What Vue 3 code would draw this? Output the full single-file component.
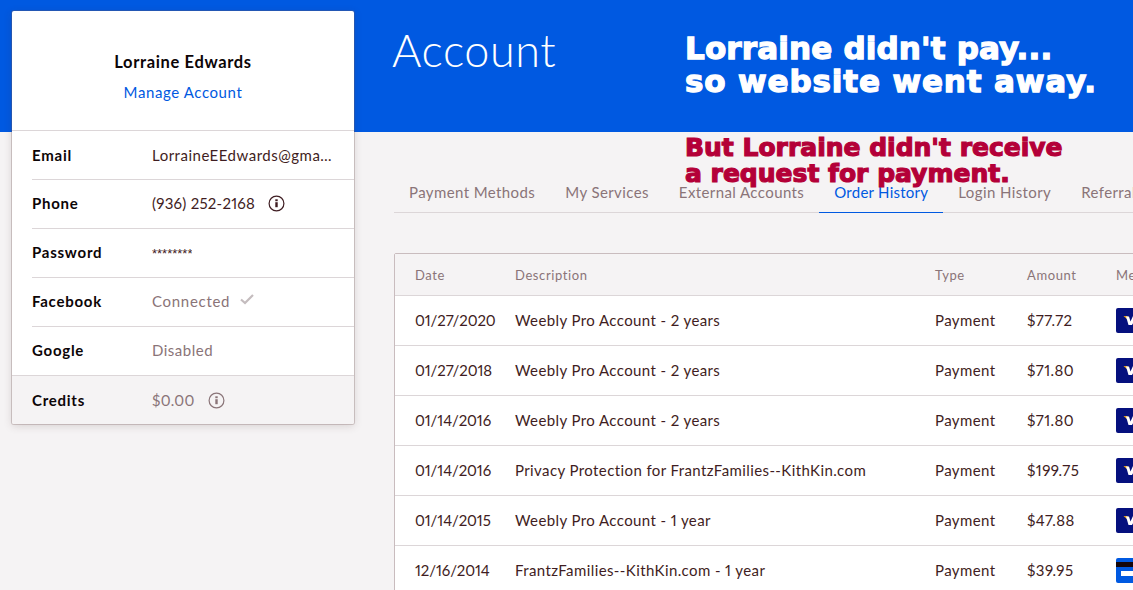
<script setup>
const rows = [
  { label: 'Email', value: 'LorraineEEdwards@gmail.com', kind: 'dark' },
  { label: 'Phone', value: '(936) 252-2168', kind: 'dark num', info: true },
  { label: 'Password', value: '********', kind: 'dark pw' },
  { label: 'Facebook', value: 'Connected', kind: 'muted wide', check: true },
  { label: 'Google', value: 'Disabled', kind: 'muted' },
  { label: 'Credits', value: '$0.00', kind: 'muted num', info: true, shaded: true }
]
const tabs = ['Payment Methods', 'My Services', 'External Accounts', 'Order History', 'Login History', 'Referrals']
const orders = [
  ['01/27/2020', 'Weebly Pro Account - 2 years', '$77.72', 'visa'],
  ['01/27/2018', 'Weebly Pro Account - 2 years', '$71.80', 'visa'],
  ['01/14/2016', 'Weebly Pro Account - 2 years', '$71.80', 'visa'],
  ['01/14/2016', 'Privacy Protection for FrantzFamilies--KithKin.com', '$199.75', 'visa'],
  ['01/14/2015', 'Weebly Pro Account - 1 year', '$47.88', 'visa'],
  ['12/16/2014', 'FrantzFamilies--KithKin.com - 1 year', '$39.95', 'card']
]
</script>

<template>
  <div class="page">
    <div class="band"></div>
    <aside class="card">
      <div class="who">
        <div class="name">Lorraine Edwards</div>
        <a class="manage">Manage Account</a>
      </div>
      <div v-for="r in rows" :key="r.label" class="row" :class="{ shaded: r.shaded }">
        <div class="inner">
          <span class="label">{{ r.label }}</span>
          <span class="value" :class="r.kind">
            <span class="vt">{{ r.value }}</span>
            <svg v-if="r.info" class="ico" width="17" height="17" viewBox="0 0 17 17" fill="none" stroke="currentColor">
              <circle cx="8.5" cy="8.5" r="7.4" stroke-width="1.2" />
              <rect x="7.3" y="7.2" width="2.4" height="5" fill="currentColor" stroke="none" />
              <rect x="7.3" y="4.3" width="2.4" height="1.9" fill="currentColor" stroke="none" />
            </svg>
            <svg v-if="r.check" class="ico chk" width="14" height="11" viewBox="0 0 14 11" fill="none" stroke="#c4bcbe" stroke-width="2.2">
              <path d="M1 5.5 L5 9 L13 1" />
            </svg>
          </span>
        </div>
      </div>
    </aside>
    <h1 class="title">Account</h1>
    <main class="main">
      <nav class="tabs">
        <a v-for="t in tabs" :key="t" class="tab" :class="{ on: t === 'Order History' }">{{ t }}</a>
      </nav>
      <div class="table">
        <div class="tr head">
          <span>Date</span><span>Description</span><span>Type</span><span>Amount</span><span>Method</span>
        </div>
        <div v-for="(o, i) in orders" :key="i" class="tr">
          <span class="date">{{ o[0] }}</span><span>{{ o[1] }}</span><span>Payment</span><span>{{ o[2] }}</span>
          <span>
            <svg v-if="o[3] === 'visa'" class="pay" width="38" height="25" viewBox="0 0 38 25">
              <rect width="38" height="25" rx="2" fill="#05107e" />
              <path d="M7.5 8 L11.5 8 L13 13 Z" fill="#e8a020" />
              <path d="M10 8.5 L13 8.5 L14.5 13.5 L17 8 L21 8 L16 17 L12.5 17 Z" fill="#fff" />
            </svg>
            <svg v-else class="pay" width="38" height="25" viewBox="0 0 38 25">
              <rect width="38" height="25" rx="2" fill="#0059e1" />
              <rect y="4" width="38" height="5" fill="#15060a" />
              <rect x="5" y="13" width="28" height="5" fill="#fff" />
            </svg>
          </span>
        </div>
      </div>
    </main>
    <div class="note white"><span class="l1">Lorraine didn't pay...</span><br /><span class="l2">so website went away.</span></div>
    <div class="note red">But Lorraine didn't receive<br />a request for payment.</div>
  </div>
</template>

<style>
html, body { margin: 0; background: #f5f3f4; overflow: hidden; }
</style>

<style scoped>
.page {
  position: relative;
  width: 1133px;
  height: 590px;
  overflow: hidden;
  display: grid;
  grid-template-columns: 366px 1fr;
  grid-template-rows: 132px 1fr;
  font-family: Lato, "Liberation Sans", sans-serif;
  font-size: 15px;
  font-variant-numeric: proportional-nums;
  color: #3f1d22;
  background: #f5f3f4;
}
.band { grid-area: 1 / 1 / 2 / 3; background: #0059e1; }
.card {
  grid-area: 1 / 1 / 3 / 2;
  z-index: 1;
  margin: 11px 0 0 12px;
  width: 342px;
  align-self: start;
  background: #fff;
  border-radius: 2px;
  box-shadow: 0 0 0 1px rgba(120, 90, 90, 0.28), 0 2px 8px rgba(80, 50, 50, 0.18);
}
.who {
  height: 120px;
  box-sizing: border-box;
  padding-top: 41px;
  text-align: center;
  border-bottom: 1px solid #dcd6d8;
}
.name { color: #0c0507; font-weight: 700; font-size: 16.5px; line-height: 20px; letter-spacing: 0.65px; }
.manage { display: block; color: #0059e1; margin-top: 10px; line-height: 20px; letter-spacing: 0.6px; }
.row { padding-left: 20px; height: 49px; box-sizing: border-box; }
.inner {
  height: 49px;
  box-sizing: border-box;
  border-bottom: 1px solid #dcd6d8;
  display: flex;
  align-items: center;
}
.row:nth-child(n+3) .inner { padding-bottom: 2px; }
.row.shaded { background: #f5f3f4; padding-left: 20px; border-radius: 0 0 2px 2px; margin-top: -1px; border-top: 1px solid #dcd6d8; }
.row.shaded .inner { border-bottom: 0; height: 48px; padding-bottom: 0; }
.label { width: 120px; flex: none; color: #0c0507; font-weight: 700; letter-spacing: 0.75px; }
.value { display: flex; align-items: center; min-width: 0; width: 180px; }
.vt { white-space: nowrap; overflow: hidden; text-overflow: ellipsis; letter-spacing: 0.5px; }
.dark { color: #3f1d22; }
.muted { color: #8a7478; }
.num .vt { letter-spacing: 0.25px; }
.wide .vt { letter-spacing: 0.7px; }
.pw .vt { font-family: "Liberation Sans", sans-serif; font-size: 13px; letter-spacing: 0; transform: translateY(1px); }
.ico { flex: none; margin-left: 13px; }
.chk { margin-left: 10px; margin-top: -3px; }
.title {
  grid-area: 1 / 2 / 2 / 3;
  margin: 23px 0 0 26px;
  color: #fff;
  font-size: 45px;
  font-weight: 300;
  line-height: 54px;
  letter-spacing: 0.6px;
}
.main { grid-area: 2 / 2 / 3 / 3; padding: 0 0 0 28px; min-width: 0; }
.tabs {
  margin-top: 44px;
  height: 36px;
  width: 780px;
  display: flex;
  border-bottom: 1px solid #dcd6d8;
  color: #8a7478;
}
.tab { padding: 0 15px; line-height: 33px; white-space: nowrap; letter-spacing: 0.4px; height: 36px; box-sizing: border-box; }
.tab.on { color: #0059e1; border-bottom: 1px solid #0059e1; height: 37px; letter-spacing: 0.25px; }
.table {
  margin-top: 40px;
  width: 780px;
  background: #fff;
  border: 1px solid #c9bcbe;
  border-radius: 2px 0 0 0;
}
.tr {
  display: grid;
  grid-template-columns: 100px 420px 92px 89px 1fr;
  align-items: center;
  height: 50px;
  box-sizing: border-box;
  padding-left: 20px;
  padding-bottom: 1px;
  border-bottom: 1px solid #dcd6d8;
  letter-spacing: 0.4px;
  white-space: nowrap;
}
.date { letter-spacing: -0.1px; }
.tr.head { height: 42px; padding-bottom: 0; background: #f5f3f4; color: #8a7478; font-size: 13px; font-weight: 400; letter-spacing: 0.6px; }
.pay { display: block; }
.note {
  position: absolute;
  left: 685px;
  font-family: "DejaVu Sans", sans-serif;
  font-weight: 700;
  white-space: nowrap;
}
.white { top: 32px; color: #fff; font-size: 31px; line-height: 32.5px; -webkit-text-stroke: 1.3px currentColor; }
.l1 { letter-spacing: 0.15px; }
.l2 { letter-spacing: 0.85px; }
.red { top: 135px; color: #b40038; font-size: 25px; line-height: 26px; -webkit-text-stroke: 1.2px currentColor; }
</style>
